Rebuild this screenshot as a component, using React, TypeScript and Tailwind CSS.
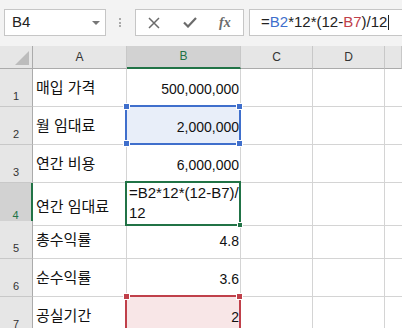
import React from "react";

type Row = {
  n: number;
  label: string;
  value?: string;
};

const rows: Row[] = [
  { n: 1, label: "매입 가격", value: "500,000,000" },
  { n: 2, label: "월 임대료", value: "2,000,000" },
  { n: 3, label: "연간 비용", value: "6,000,000" },
  { n: 4, label: "연간 임대료" },
  { n: 5, label: "총수익률", value: "4.8" },
  { n: 6, label: "순수익률", value: "3.6" },
  { n: 7, label: "공실기간", value: "2" },
];

const gridCols = "grid grid-cols-[33px_94px_114px_72px_72px_1fr]";

function Handle({ color, pos }: { color: string; pos: string }) {
  return (
    <div
      className={`absolute h-[7px] w-[7px] border border-white ${color} ${pos}`}
    />
  );
}

function FormulaBar() {
  return (
    <div className="flex h-[46px] items-start bg-[#f3f3f3] pt-[9px]">
      <div className="ml-[4px] flex h-[27px] w-[102px] items-center justify-between border border-[#c6c6c6] bg-white pl-[7px] pr-[5px]">
        <span className="text-[15px] text-[#222]">B4</span>
        <svg width="8" height="4" viewBox="0 0 8 4">
          <path d="M0 0 L8 0 L4 4 Z" fill="#777" />
        </svg>
      </div>
      <div className="ml-[13px] mt-[9px] flex flex-col gap-[1.5px]">
        <div className="h-[2px] w-[2px] bg-[#aaa]" />
        <div className="h-[2px] w-[2px] bg-[#aaa]" />
        <div className="h-[2px] w-[2px] bg-[#aaa]" />
      </div>
      <div className="ml-[14px] flex h-[27px] w-[109px] items-center border border-[#c6c6c6] bg-white">
        <svg className="ml-[12px]" width="12" height="12" viewBox="0 0 12 12">
          <path
            d="M1 1 L11 11 M11 1 L1 11"
            stroke="#6b6b6b"
            strokeWidth="1.5"
            fill="none"
          />
        </svg>
        <svg className="ml-[23px]" width="14" height="11" viewBox="0 0 14 11">
          <path
            d="M1 5.5 L5 9.5 L13 1"
            stroke="#6b6b6b"
            strokeWidth="2.2"
            fill="none"
          />
        </svg>
        <span className="ml-[22px] font-['Liberation_Serif',serif] text-[14px] font-bold italic text-[#6b6b6b]">
          fx
        </span>
      </div>
      <div className="ml-[5px] flex h-[27px] flex-1 items-center border border-r-0 border-[#c6c6c6] bg-white pl-[11px]">
        <span className="text-[15px] text-[#222]">
          =<span className="text-[#3f6fcc]">B2</span>*12*(12-
          <span className="text-[#c0404a]">B7</span>)/12
        </span>
        <div className="ml-[1px] h-[15px] w-[1px] bg-[#222]" />
      </div>
    </div>
  );
}

function HeaderRow() {
  const letters = ["A", "B", "C", "D", ""];
  return (
    <div className={`${gridCols} h-[23px]`}>
      <div className="flex items-end justify-end border-r border-b border-r-[#ababab] border-b-[#ababab] bg-[#e6e6e6] pb-[3px] pr-[3px]">
        <svg width="14" height="14" viewBox="0 0 14 14">
          <path d="M14 0 L14 14 L0 14 Z" fill="#bcbcbc" />
        </svg>
      </div>
      {letters.map((l, i) =>
        l === "B" ? (
          <div
            key={i}
            className="flex items-center justify-center border-r border-b-2 border-r-[#c8c8c8] border-b-[#217346] bg-[#d2d2d2] pb-[1px] text-[12px] text-[#217346]"
          >
            {l}
          </div>
        ) : (
          <div
            key={i}
            className="flex items-center justify-center border-r border-b border-r-[#c8c8c8] border-b-[#ababab] bg-[#e6e6e6] text-[12px] text-[#333]"
          >
            {l}
          </div>
        ),
      )}
    </div>
  );
}

function BCell({ row }: { row: Row }) {
  if (row.n === 4) {
    return (
      <div className="relative border-r border-b border-[#d4d4d4] bg-white">
        <div className="flex h-full flex-col justify-end overflow-hidden pb-[2px] pl-[2px] text-[15px] leading-[20px] text-[#111]">
          <div>=B2*12*(12-B7)/</div>
          <div>12</div>
        </div>
        <div className="absolute -top-[2px] -left-[2px] -right-[1px] -bottom-[1px] z-10 border-2 border-[#217346]">
          <div className="absolute -right-[4px] -bottom-[4px] h-[6px] w-[6px] border border-white bg-[#217346]" />
        </div>
      </div>
    );
  }
  const fill =
    row.n === 2 ? "bg-[#e8eef9]" : row.n === 7 ? "bg-[#f8e6e7]" : "bg-white";
  return (
    <div className={`relative border-r border-b border-[#d4d4d4] ${fill}`}>
      <div className="flex h-full items-end justify-end pb-[8px] pr-[1px] text-[14px] leading-[18px] text-[#111]">
        {row.value}
      </div>
      {row.n === 2 && (
        <div className="absolute -top-[2px] -left-[2px] -right-[1px] -bottom-[1px] z-10 border-2 border-[#3f6fcc]">
          <Handle color="bg-[#3f6fcc]" pos="-top-[4px] -left-[4px]" />
          <Handle color="bg-[#3f6fcc]" pos="-top-[4px] -right-[4px]" />
          <Handle color="bg-[#3f6fcc]" pos="-bottom-[4px] -left-[4px]" />
          <Handle color="bg-[#3f6fcc]" pos="-bottom-[4px] -right-[4px]" />
        </div>
      )}
      {row.n === 7 && (
        <div className="absolute -top-[2px] -left-[2px] -right-[1px] -bottom-[1px] z-10 border-2 border-[#c0404a]">
          <Handle color="bg-[#c0404a]" pos="-top-[4px] -left-[4px]" />
          <Handle color="bg-[#c0404a]" pos="-top-[4px] -right-[4px]" />
        </div>
      )}
    </div>
  );
}

function SheetRow({ row }: { row: Row }) {
  const active = row.n === 4;
  return (
    <div className={`${gridCols} h-[38px]`}>
      <div
        className={
          active
            ? "flex items-end justify-center border-r-2 border-b border-r-[#217346] border-b-[#c8c8c8] bg-[#d2d2d2] pb-[3px] text-[11px] leading-[14px] text-[#217346]"
            : "flex items-end justify-center border-r border-b border-r-[#ababab] border-b-[#c8c8c8] bg-[#e6e6e6] pb-[3px] text-[11px] leading-[14px] text-[#333]"
        }
      >
        {row.n}
      </div>
      <div className="flex items-end border-r border-b border-[#d4d4d4] pb-[8px] pl-[3px] text-[15px] leading-[20px] text-[#111]">
        {row.label}
      </div>
      <BCell row={row} />
      <div className="border-r border-b border-[#d4d4d4]" />
      <div className="border-r border-b border-[#d4d4d4]" />
      <div className="border-b border-[#d4d4d4]" />
    </div>
  );
}

export default function App() {
  return (
    <div className="h-[328px] w-[402px] overflow-hidden bg-white font-['Liberation_Sans','Noto_Sans_CJK_KR',sans-serif]">
      <FormulaBar />
      <HeaderRow />
      {rows.map((r) => (
        <SheetRow key={r.n} row={r} />
      ))}
    </div>
  );
}
